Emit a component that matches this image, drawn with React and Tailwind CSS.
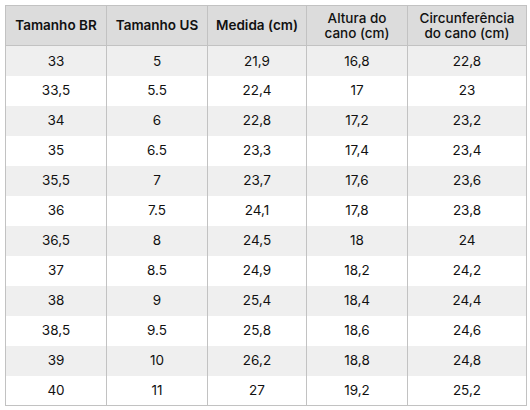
import React from 'react';

const rows = [
  ['33', '5', '21,9', '16,8', '22,8'],
  ['33,5', '5.5', '22,4', '17', '23'],
  ['34', '6', '22,8', '17,2', '23,2'],
  ['35', '6.5', '23,3', '17,4', '23,4'],
  ['35,5', '7', '23,7', '17,6', '23,6'],
  ['36', '7.5', '24,1', '17,8', '23,8'],
  ['36,5', '8', '24,5', '18', '24'],
  ['37', '8.5', '24,9', '18,2', '24,2'],
  ['38', '9', '25,4', '18,4', '24,4'],
  ['38,5', '9.5', '25,8', '18,6', '24,6'],
  ['39', '10', '26,2', '18,8', '24,8'],
  ['40', '11', '27', '19,2', '25,2'],
];

export default function App() {
  return (
    <div className="w-[530px] h-[410px] bg-white p-[5px] font-['Inter',sans-serif] text-[#111]">
      <table className="w-[521px] table-fixed border-collapse border border-[#c2c2c2] text-center">
        <colgroup>
          <col className="w-[101px]" />
          <col className="w-[101px]" />
          <col className="w-[99px]" />
          <col className="w-[101px]" />
          <col className="w-[119px]" />
        </colgroup>
        <thead>
          <tr className="h-[40px] bg-[#dcdcdc] text-[13.5px] font-semibold leading-[15px]">
            <th className="border border-[#c2c2c2] px-1 font-semibold">Tamanho BR</th>
            <th className="border border-[#c2c2c2] px-1 font-semibold">Tamanho US</th>
            <th className="border border-[#c2c2c2] px-1 font-semibold">Medida (cm)</th>
            <th className="border border-[#c2c2c2] px-1 font-medium">Altura do<br />cano (cm)</th>
            <th className="border border-[#c2c2c2] px-1 font-medium">Circunferência<br />do cano (cm)</th>
          </tr>
        </thead>
        <tbody>
          {rows.map((r, i) => (
            <tr key={i} className={`h-[30px] text-[13.5px] ${i % 2 === 0 ? 'bg-[#efefef]' : 'bg-white'}`}>
              {r.map((c, j) => (
                <td key={j} className="border-x border-[#c2c2c2]">{c}</td>
              ))}
            </tr>
          ))}
        </tbody>
      </table>
    </div>
  );
}
